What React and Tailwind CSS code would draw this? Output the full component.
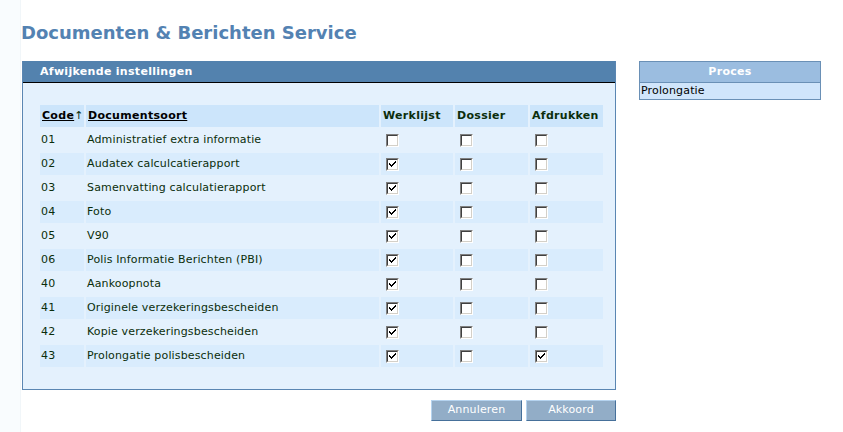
import React from "react";

const rows = [
  { code: "01", name: "Administratief extra informatie", w: false, d: false, a: false },
  { code: "02", name: "Audatex calculcatierapport", w: true, d: false, a: false },
  { code: "03", name: "Samenvatting calculatierapport", w: true, d: false, a: false },
  { code: "04", name: "Foto", w: true, d: false, a: false },
  { code: "05", name: "V90", w: true, d: false, a: false },
  { code: "06", name: "Polis Informatie Berichten (PBI)", w: true, d: false, a: false },
  { code: "40", name: "Aankoopnota", w: true, d: false, a: false },
  { code: "41", name: "Originele verzekeringsbescheiden", w: true, d: false, a: false },
  { code: "42", name: "Kopie verzekeringsbescheiden", w: true, d: false, a: false },
  { code: "43", name: "Prolongatie polisbescheiden", w: true, d: false, a: true },
];

function Check({ on }) {
  return (
    <span className="block w-[13px] h-[13px] border-t border-l border-t-[#808080] border-l-[#808080] border-b border-r border-b-white border-r-white">
      <span className="block w-[11px] h-[11px] bg-white border-t border-l border-t-[#404040] border-l-[#404040] border-b border-r border-b-[#d4d0c8] border-r-[#d4d0c8]">
        {on && (
          <svg width="9" height="9" viewBox="0 0 9 9" className="block">
            <path d="M1 3h1v1h1v1h1V4h1V3h1V2h1V1h1v2H7v1H6v1H5v1H4v1H3V6H2V5H1z" fill="#000" />
          </svg>
        )}
      </span>
    </span>
  );
}

export default function App() {
  const txt = "h-[22px] flex items-center px-px";
  const box = "h-[22px] flex items-center pl-[5px]";
  const head = "h-[22px] flex items-center px-[2px] bg-[#cce5fb] font-bold tracking-[0.3px]";
  return (
    <div className="flex min-h-[432px] bg-white text-[11px] text-[#0b2e0b] tracking-[0.15px] [font-family:'DejaVu_Sans',Verdana,sans-serif]">
      <div className="w-[21px] shrink-0 bg-[#f9fcfe] border-r border-[#f1f6f9]" />
      <div className="flex-1">
        <h1 className="pt-[21px] text-[18px] leading-[24px] font-bold tracking-normal text-[#5382b2]">
          Documenten &amp; Berichten Service
        </h1>

        <div className="flex items-start gap-[23px] mt-[16px] pl-px">
          <div className="w-[594px]">
            {/* panel */}
            <div className="border border-t-0 border-[#5a86b2] bg-[#e4f1fd]">
              <div className="h-[22px] bg-[#5382ae] border-b border-black pl-[17px] pt-[2px] flex items-center text-white font-bold tracking-[0.3px]">
                Afwijkende instellingen
              </div>
              <div className="pt-[22px] pb-[22px] pl-[17px]">
                <div className="grid grid-cols-[44px_293px_72px_73px_73px] gap-[2px]">
                  <div className={`${head} text-black`}>
                    <span className="underline">Code</span>
                    <span className="font-normal text-[#0b2e0b]">↑</span>
                  </div>
                  <div className={`${head} text-black underline`}>Documentsoort</div>
                  <div className={head}>Werklijst</div>
                  <div className={head}>Dossier</div>
                  <div className={head}>Afdrukken</div>
                  {rows.map((r, i) => {
                    const bg = i % 2 === 1 ? "bg-[#d9ecfd]" : "";
                    return (
                      <React.Fragment key={r.code}>
                        <div className={`${txt} ${bg}`}>{r.code}</div>
                        <div className={`${txt} ${bg}`}>{r.name}</div>
                        <div className={`${box} ${bg}`}><Check on={r.w} /></div>
                        <div className={`${box} ${bg}`}><Check on={r.d} /></div>
                        <div className={`${box} ${bg}`}><Check on={r.a} /></div>
                      </React.Fragment>
                    );
                  })}
                </div>
              </div>
            </div>

            <div className="flex justify-end gap-[4px] mt-[10px]">
              <button className="w-[91px] h-[21px] bg-[#92adc7] text-white border border-t-[#b5d3ef] border-l-[#b5d3ef] border-b-[#46709a] border-r-[#46709a]">
                Annuleren
              </button>
              <button className="w-[90px] h-[21px] bg-[#92adc7] text-white border border-t-[#b5d3ef] border-l-[#b5d3ef] border-b-[#46709a] border-r-[#46709a]">
                Akkoord
              </button>
            </div>
          </div>

          <div className="w-[182px] border border-[#6a90b6]">
            <div className="h-[21px] bg-[#9bbde0] border-b border-[#6a90b6] flex items-center justify-center text-white font-bold tracking-[0.3px]">
              Proces
            </div>
            <div className="h-[16px] bg-[#d0e5fb] flex items-center pl-px text-black">Prolongatie</div>
          </div>
        </div>
      </div>
    </div>
  );
}
